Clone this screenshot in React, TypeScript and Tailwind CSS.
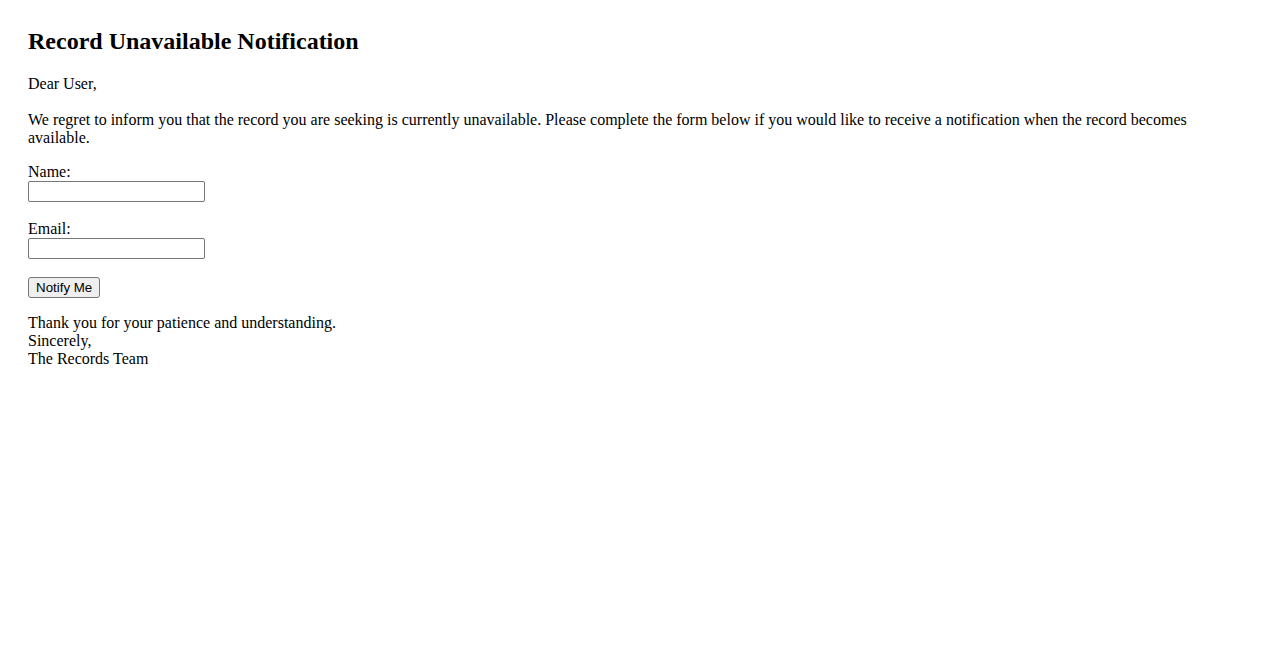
export default function App() {
  return (
    <div className="min-h-screen bg-white px-[28px] pt-[27px] text-[16px] leading-[18px] text-black [font-family:'Liberation_Serif','Times_New_Roman',serif]">
      <h2 className="mb-[20px] text-[24px] font-bold leading-[28px]">Record Unavailable Notification</h2>
      <p className="mb-[18px]">Dear User,</p>
      <p className="mb-[16px]">
        We regret to inform you that the record you are seeking is currently unavailable. Please complete the form below if you would like to receive a notification when the record becomes available.
      </p>
      <form className="flex flex-col items-start" onSubmit={(e) => e.preventDefault()}>
        <label htmlFor="name" className="block">Name:</label>
        <input
          id="name"
          type="text"
          className="mb-[18px] h-[21px] w-[177px] rounded-[2px] border border-[#767676] bg-white px-[2px] text-[13px]"
        />
        <label htmlFor="email" className="block">Email:</label>
        <input
          id="email"
          type="email"
          className="mb-[18px] h-[21px] w-[177px] rounded-[2px] border border-[#767676] bg-white px-[2px] text-[13px]"
        />
        <button
          type="submit"
          className="mb-[16px] h-[21px] rounded-[3px] border border-[#767676] bg-[#efefef] px-[7px] text-[13.33px] leading-[15px] [font-family:'Liberation_Sans',Arial,sans-serif]"
        >
          Notify Me
        </button>
      </form>
      <p>
        Thank you for your patience and understanding.
        <br />
        Sincerely,
        <br />
        The Records Team
      </p>
    </div>
  );
}
